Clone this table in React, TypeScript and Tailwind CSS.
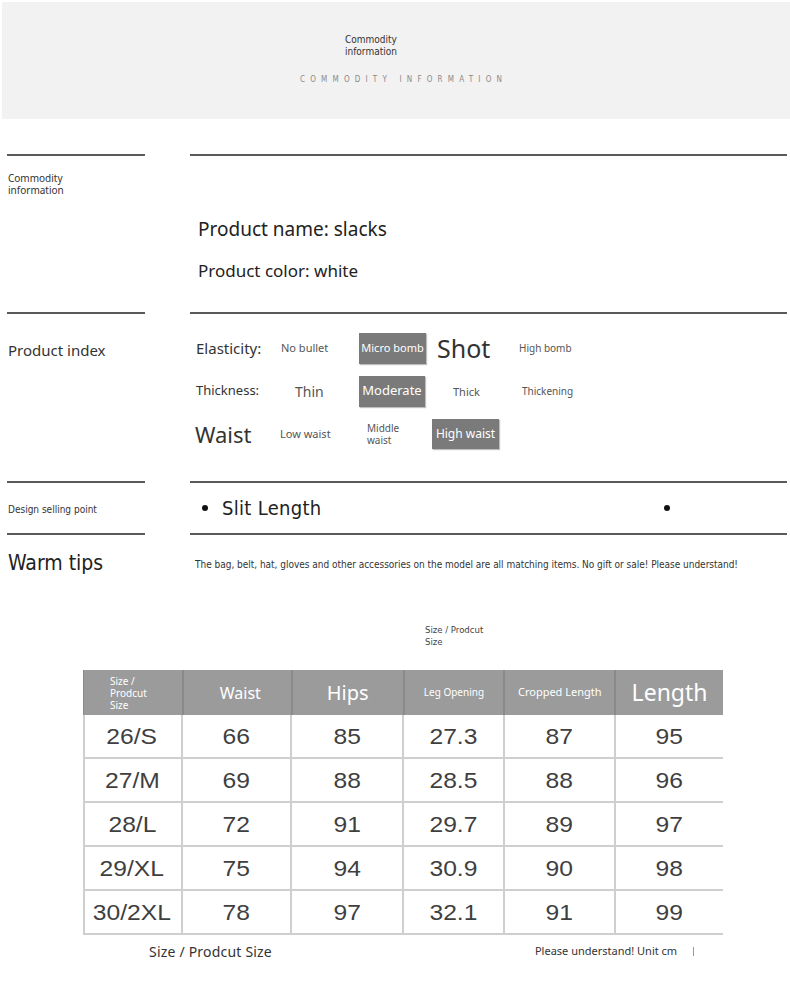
import React from "react";

const narrow = { fontFamily: '"Liberation Sans Narrow", "DejaVu Sans Condensed", "Noto Sans", sans-serif' };

function Box({ children, cls }: { children: React.ReactNode; cls: string }) {
  return (
    <div className={`flex items-center justify-center bg-[#7a7a7a] text-white shadow-[1px_1px_1px_rgba(0,0,0,0.25)] ${cls}`}>
      {children}
    </div>
  );
}

const rows = [
  ["26/S", "66", "85", "27.3", "87", "95"],
  ["27/M", "69", "88", "28.5", "88", "96"],
  ["28/L", "72", "91", "29.7", "89", "97"],
  ["29/XL", "75", "94", "30.9", "90", "98"],
  ["30/2XL", "78", "97", "32.1", "91", "99"],
];
const widths = ["w-[100px]", "w-[109px]", "w-[112px]", "w-[101px]", "w-[111px]", "w-[107px]"];

export default function App() {
  return (
    <div className="w-[790px] h-[1008px] bg-white text-[#333] overflow-hidden" style={{ fontFamily: '"Noto Sans", sans-serif' }}>
      {/* Header band */}
      <div className="ml-[2px] mt-[2px] h-[117px] bg-[#f2f2f2] pt-[32px]">
        <div className="ml-[343px] w-[70px] text-[10px] leading-[12px] text-[#333]" style={narrow}>
          Commodity information
        </div>
        <div className="ml-[298px] mt-[17px] text-[8px] leading-[10px] tracking-[5.2px] text-[#8a8a8a]" style={narrow}>
          COMMODITY INFORMATION
        </div>
      </div>

      {/* Section 1 */}
      <div className="mt-[35px] flex h-[158px]">
        <div className="ml-[7px] w-[138px] border-t-2 border-[#5a5a5a] pt-[16px] pl-[1px]">
          <div className="text-[10px] leading-[12px] text-[#333]">Commodity<br />information</div>
        </div>
        <div className="ml-[45px] w-[597px] border-t-2 border-[#5a5a5a] pl-[8px] pt-[61px]">
          <div className="text-[19px] leading-[24px] text-[#222]">Product name: slacks</div>
          <div className="mt-[19px] text-[17px] leading-[22px] text-[#222]">Product color: white</div>
        </div>
      </div>

      {/* Section 2 */}
      <div className="flex h-[169px]">
        <div className="ml-[7px] w-[138px] border-t-2 border-[#5a5a5a] pt-[26px] pl-[1px]">
          <div className="text-[15px] leading-[20px] text-[#333]">Product index</div>
        </div>
        <div className="ml-[45px] w-[597px] border-t-2 border-[#5a5a5a] pl-[5px] pt-[18px]">
          <div className="flex h-[32px] items-center">
            <div className="w-[86px] text-[15px] text-[#333] pl-[1px]">Elasticity:</div>
            <div className="w-[78px] text-[11px] text-[#555]">No bullet</div>
            <Box cls="w-[67px] h-[31px] text-[11px]">Micro bomb</Box>
            <div className="ml-[11px] w-[82px] text-[25px] leading-[30px] text-[#333]">Shot</div>
            <div className="text-[10px] text-[#555]">High bomb</div>
          </div>
          <div className="mt-[11px] flex h-[32px] items-center">
            <div className="w-[100px] text-[13px] text-[#333] pl-[1px]">Thickness:</div>
            <div className="w-[64px] text-[14px] text-[#555]">Thin</div>
            <Box cls="w-[66px] h-[31px] text-[13px]">Moderate</Box>
            <div className="ml-[28px] w-[69px] text-[11px] text-[#555] pt-[2px]">Thick</div>
            <div className="text-[10px] text-[#555]">Thickening</div>
          </div>
          <div className="mt-[11px] flex h-[32px] items-center">
            <div className="w-[85px] text-[22px] leading-[28px] text-[#333]">Waist</div>
            <div className="w-[87px] text-[11px] text-[#555]">Low waist</div>
            <div className="w-[65px] text-[10px] leading-[12px] text-[#555]">Middle<br />waist</div>
            <Box cls="w-[67px] h-[30px] text-[12px]">High waist</Box>
          </div>
        </div>
      </div>

      {/* Section 3 */}
      <div className="flex h-[52px]">
        <div className="ml-[7px] w-[138px] border-t-2 border-[#5a5a5a] pl-[1px] flex items-center">
          <div className="text-[10px] text-[#333] pt-[3px]" style={narrow}>Design selling point</div>
        </div>
        <div className="ml-[45px] w-[597px] border-t-2 border-[#5a5a5a] flex items-center">
          <div className="ml-[12px] h-[6px] w-[6px] rounded-full bg-[#111]"></div>
          <div className="ml-[14px] text-[20px] tracking-[0.3px] text-[#222]" style={narrow}>Slit Length</div>
          <div className="ml-[342px] h-[6px] w-[6px] rounded-full bg-[#111]"></div>
        </div>
      </div>

      {/* Section 4 */}
      <div className="flex h-[136px]">
        <div className="ml-[7px] w-[138px] border-t-2 border-[#5a5a5a] pl-[1px] pt-[15px]">
          <div className="text-[21px] leading-[26px] text-[#222]" style={narrow}>Warm tips</div>
        </div>
        <div className="ml-[45px] w-[597px] border-t-2 border-[#5a5a5a] pl-[5px] pt-[24px]">
          <div className="text-[10px] tracking-[-0.02px] leading-[12px] text-[#333] whitespace-nowrap" style={narrow}>
            The bag, belt, hat, gloves and other accessories on the model are all matching items. No gift or sale! Please understand!
          </div>
        </div>
      </div>

      {/* Table caption */}
      <div className="ml-[425px] -mt-[45px] w-[80px] text-[9.5px] leading-[12px] text-[#444]" style={narrow}>
        Size / Prodcut<br />Size
      </div>

      {/* Table */}
      <div className="ml-[83px] mt-[22px] w-[640px]">
        <div className="flex h-[45px] bg-[#9b9b9b] text-white border-l border-[#8a8a8a]">
          <div className={`${widths[0]} border-r-2 border-[#8a8a8a] pl-[26px] flex items-center text-[10px] leading-[12px]`}>
            Size /<br />Prodcut<br />Size
          </div>
          <div className={`${widths[1]} border-r-2 border-[#8a8a8a] flex items-center justify-center text-[16px] pl-[6px]`}>Waist</div>
          <div className={`${widths[2]} border-r-2 border-[#8a8a8a] flex items-center justify-center text-[20px]`}>Hips</div>
          <div className={`${widths[3]} border-r-2 border-[#8a8a8a] flex items-center justify-center text-[10px]`}>Leg Opening</div>
          <div className={`${widths[4]} border-r-2 border-[#8a8a8a] flex items-center justify-center text-[11px]`}>Cropped Length</div>
          <div className={`${widths[5]} flex items-center justify-center text-[23px]`}>Length</div>
        </div>
        {rows.map((r, i) => (
          <div key={i} className="flex h-[44px] border-b-2 border-l-2 border-[#cfcfcf]" style={{ fontFamily: '"Liberation Sans", Arial, sans-serif' }}>
            {r.map((c, j) => (
              <div
                key={j}
                className={`${widths[j]} ${j < 5 ? "border-r-2 border-[#cfcfcf]" : ""} ${j === 0 ? "-ml-[2px]" : ""} flex items-center justify-center text-[#3f3f3f]`}
              >
                <span className="inline-block scale-x-[1.12] text-[22px]">{c}</span>
              </div>
            ))}
          </div>
        ))}
      </div>

      {/* Bottom captions */}
      <div className="mt-[6px] flex items-center">
        <div className="ml-[149px] text-[14px] tracking-[0.2px] text-[#333]">Size / Prodcut Size</div>
        <div className="ml-[263px] text-[11px] text-[#333]">Please understand! Unit cm</div>
        <div className="ml-[16px] h-[9px] w-px bg-[#999]"></div>
      </div>
    </div>
  );
}
